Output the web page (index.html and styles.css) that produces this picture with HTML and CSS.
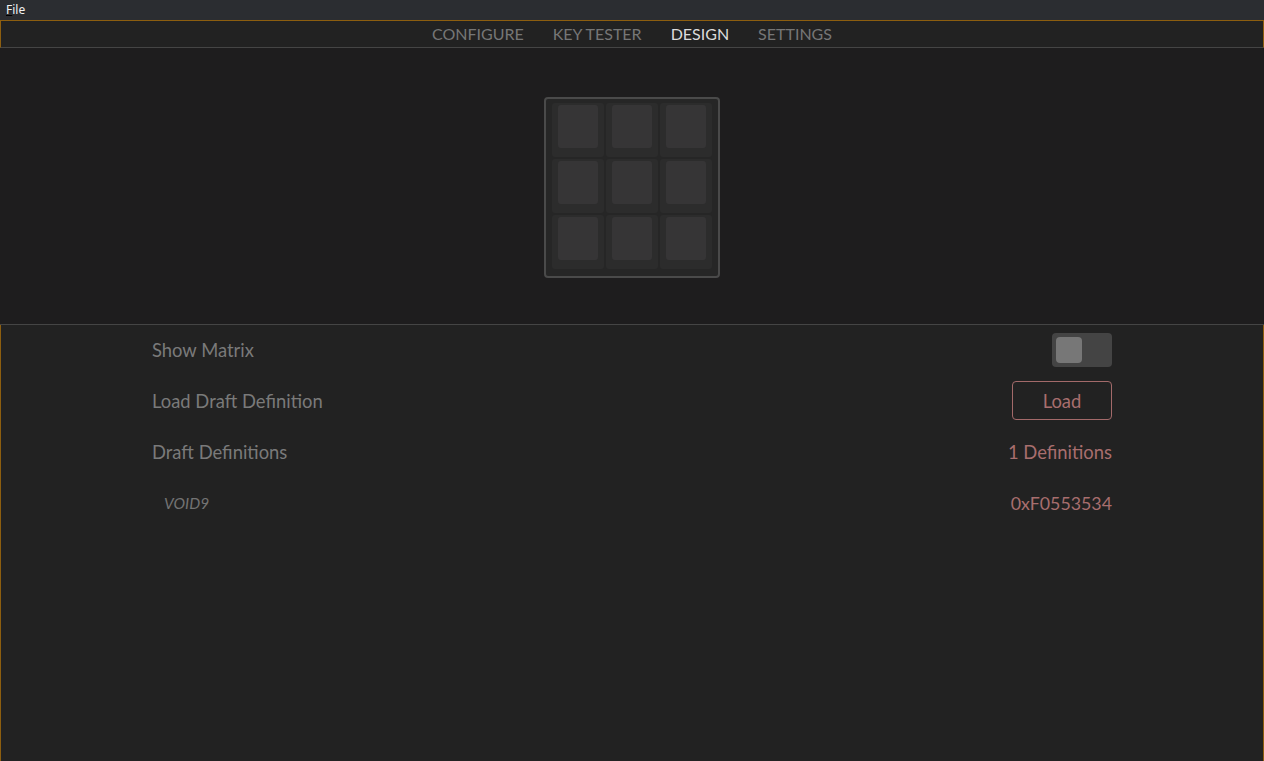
FILE: index.html
```html
<!DOCTYPE html>
<html>
<head>
<meta charset="utf-8">
<link rel="stylesheet" href="styles.css">
</head>
<body>
<div class="menubar"><span class="menu-item"><u>F</u>ile</span></div>
<nav class="nav">
  <span class="tab">Configure</span>
  <span class="tab">Key Tester</span>
  <span class="tab active">Design</span>
  <span class="tab">Settings</span>
</nav>
<section class="board-area">
  <div class="board">
    <div class="key"><div class="cap"></div></div>
    <div class="key"><div class="cap"></div></div>
    <div class="key"><div class="cap"></div></div>
    <div class="key"><div class="cap"></div></div>
    <div class="key"><div class="cap"></div></div>
    <div class="key"><div class="cap"></div></div>
    <div class="key"><div class="cap"></div></div>
    <div class="key"><div class="cap"></div></div>
    <div class="key"><div class="cap"></div></div>
  </div>
</section>
<section class="pane">
  <div class="rows">
    <div class="row">
      <span class="label">Show Matrix</span>
      <span class="toggle"><span class="knob"></span></span>
    </div>
    <div class="row">
      <span class="label">Load Draft Definition</span>
      <button class="btn">Load</button>
    </div>
    <div class="row">
      <span class="label">Draft Definitions</span>
      <span class="value">1 Definitions</span>
    </div>
    <div class="row sub">
      <span class="sublabel">VOID9</span>
      <span class="value mono-ish">0xF0553534</span>
    </div>
  </div>
</section>
</body>
</html>
```
FILE: styles.css
```css
html, body {
  margin: 0;
  padding: 0;
  height: 100%;
}
body {
  display: flex;
  flex-direction: column;
  background: #222222;
  font-family: "Lato", "Noto Sans", sans-serif;
  overflow: hidden;
}
.menubar {
  height: 20px;
  background: #2b2d31;
  display: flex;
  align-items: center;
  flex: none;
}
.menu-item {
  font-family: "Noto Sans", "DejaVu Sans", sans-serif;
  font-size: 12px;
  color: #f2f2f2;
  padding-left: 6px;
  line-height: 20px;
}
.menu-item u {
  text-decoration-color: #000;
}
.nav {
  flex: none;
  border-top: 1px solid #8d5e0f;
  border-left: 1px solid #8d5e0f;
  border-right: 1px solid #8d5e0f;
  border-bottom: 1px solid #454545;
  background: #222222;
  display: flex;
  justify-content: center;
  align-items: center;
  gap: 29px;
  padding-bottom: 2px;
  box-sizing: content-box;
  height: 24px;
}
.tab {
  text-transform: uppercase;
  font-size: 16px;
  color: #767676;
}
.tab.active {
  color: #dcdcdc;
}
.board-area {
  flex: none;
  height: 277px;
  background: #1e1d1e;
  border-bottom: 1px solid #454545;
  display: flex;
  justify-content: center;
  align-items: flex-start;
  padding-top: 49px;
  box-sizing: border-box;
}
.board {
  width: 176px;
  height: 181px;
  box-sizing: border-box;
  border: 2px solid #4a4a4a;
  border-radius: 4px;
  background: #262626;
  padding: 4px 6px 7px 6px;
  display: grid;
  grid-template-columns: repeat(3, 52px);
  grid-template-rows: repeat(3, 54px);
  gap: 2px;
}
.key {
  background: #2c2c2c;
  border-radius: 3px;
  padding: 2px 6px 9px 6px;
  box-sizing: border-box;
  display: flex;
}
.cap {
  flex: 1;
  background: #363536;
  border-radius: 3px;
}
.pane {
  flex: 1;
  background: #222222;
  border-left: 1px solid #8d5e0f;
  border-right: 1px solid #8d5e0f;
}
.rows {
  width: 960px;
  margin: 0 auto;
  display: flex;
  flex-direction: column;
}
.row {
  height: 51px;
  box-sizing: border-box;
  padding-bottom: 2px;
  display: flex;
  justify-content: space-between;
  align-items: center;
}
.label {
  font-size: 18.4px;
  color: #7a7a7a;
}
.sublabel {
  font-size: 15.5px;
  font-style: italic;
  color: #737373;
  padding-left: 12px;
}
.value {
  font-size: 18.4px;
  color: #a86e6e;
}
.mono-ish {
  font-size: 17.8px;
}
.toggle {
  width: 60px;
  height: 34px;
  box-sizing: border-box;
  background: #444444;
  border-radius: 4px;
  padding: 4px;
  display: flex;
}
.knob {
  width: 26px;
  height: 26px;
  border-radius: 4px;
  background: #777777;
}
.btn {
  width: 100px;
  height: 39px;
  background: transparent;
  border: 1px solid #a36a6a;
  border-radius: 4px;
  color: #a86e6e;
  font-family: inherit;
  font-size: 18.4px;
  padding: 0;
}
```
